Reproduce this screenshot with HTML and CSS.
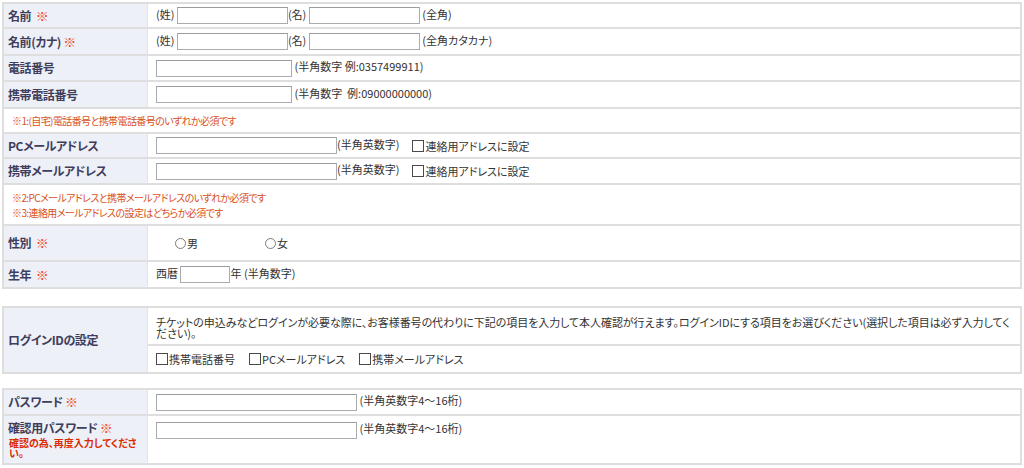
FILE: index.html
```html
<!DOCTYPE html>
<html lang="ja">
<head>
<meta charset="utf-8">
<title>会員情報入力</title>
<link rel="stylesheet" href="styles.css">
</head>
<body>
<div class="page">
  <table class="form">
    <tr class="r25"><th>名前&nbsp;&nbsp;<span class="req">※</span></th><td>(姓)&nbsp;<input class="txt w110" type="text">(名)&nbsp;<input class="txt w110" type="text"> (全角)</td></tr>
    <tr class="r27"><th>名前(カナ)&nbsp;<span class="req">※</span></th><td>(姓)&nbsp;<input class="txt w110" type="text">(名)&nbsp;<input class="txt w110" type="text"> (全角カタカナ)</td></tr>
    <tr class="r26"><th>電話番号</th><td><input class="txt w136" type="text"> (半角数字 例:0357499911)</td></tr>
    <tr class="r27"><th>携帯電話番号</th><td><input class="txt w136" type="text"> (半角数字&nbsp; 例:09000000000)</td></tr>
    <tr class="r25"><td class="note" colspan="2">※1:(自宅)電話番号と携帯電話番号のいずれか必須です</td></tr>
    <tr class="r25"><th>PCメールアドレス</th><td><input class="txt w181" type="text">(半角英数字)<span class="chk-gap"></span><label class="chk"><input class="box" type="checkbox">連絡用アドレスに設定</label></td></tr>
    <tr class="r26"><th>携帯メールアドレス</th><td><input class="txt w181" type="text">(半角英数字)<span class="chk-gap"></span><label class="chk"><input class="box" type="checkbox">連絡用アドレスに設定</label></td></tr>
    <tr class="r41"><td class="note" colspan="2">※2:PCメールアドレスと携帯メールアドレスのいずれか必須です<br>※3:連絡用メールアドレスの設定はどちらか必須です</td></tr>
    <tr class="r36"><th>性別&nbsp;&nbsp;<span class="req">※</span></th><td><div class="gender"><label class="opt"><input class="radio" type="radio" name="sex">男</label><label class="opt"><input class="radio" type="radio" name="sex">女</label></div></td></tr>
    <tr class="r27"><th>生年&nbsp;&nbsp;<span class="req">※</span></th><td>西暦 <input class="txt w50" type="text">年 (半角数字)</td></tr>
  </table>

  <table class="form login">
    <tr class="r38"><th rowspan="2">ログインIDの設定</th><td><div class="desc">チケットの申込みなどログインが必要な際に、お客様番号の代わりに下記の項目を入力して本人確認が行えます。ログインIDにする項目をお選びください(選択した項目は必ず入力してください)。</div></td></tr>
    <tr class="r28"><td><div class="choices"><label class="chk"><input class="box" type="checkbox">携帯電話番号</label><label class="chk"><input class="box" type="checkbox">PCメールアドレス</label><label class="chk"><input class="box" type="checkbox">携帯メールアドレス</label></div></td></tr>
  </table>

  <table class="form pass">
    <tr class="r26"><th>パスワード <span class="req">※</span></th><td><input class="txt w200" type="password"> (半角英数字4〜16桁)</td></tr>
    <tr class="r49"><th class="top">確認用パスワード <span class="req">※</span><div class="warn">確認の為、再度入力してください。</div></th><td class="top"><input class="txt w200" type="password"> (半角英数字4〜16桁)</td></tr>
  </table>
</div>
</body>
</html>
```

FILE: styles.css
```css
* {
  box-sizing: border-box;
}

body {
  margin: 0;
  background: #ffffff;
  font-family: "Noto Sans CJK JP", "Noto Sans", sans-serif;
  font-size: 11px;
  color: #333333;
  font-feature-settings: "palt";
}

.page {
  width: 1024px;
  padding: 2px 2px 0 2px;
}

.form {
  width: 1020px;
  border-collapse: separate;
  border-spacing: 0;
  border-top: 2px solid #dedede;
  border-left: 2px solid #dedede;
  border-right: 2px solid #dedede;
}

.form th,
.form td {
  border-bottom: 2px solid #dedede;
  padding: 0 7px 0 8px;
  vertical-align: middle;
  line-height: 14px;
}

.form th {
  width: 144px;
  padding: 0 4px 0 4px;
  background: #eef0f8;
  border-right: 1px solid #e2e4ec;
  text-align: left;
  font-size: 12px;
  font-weight: bold;
  letter-spacing: -0.4px;
  color: #3e3e5c;
}

.req {
  color: #f24c16;
  font-weight: bold;
  font-size: 13px;
}

.r25 > th, .r25 > td { height: 25px; }
.r26 > th, .r26 > td { height: 26px; }
.r27 > th, .r27 > td { height: 27px; }
.r28 > td { height: 28px; }
.r36 > th, .r36 > td { height: 36px; }
.r38 > td { height: 38px; }
.r41 > td { height: 41px; }
.r49 > th, .r49 > td { height: 49px; }

.txt {
  height: 17px;
  margin: 0;
  padding: 0 2px;
  border: 1px solid #a9abb0;
  border-top-color: #9a9ca2;
  background: #ffffff;
  vertical-align: middle;
  font-size: 12px;
}

.w50 { width: 50px; }
.w110 { width: 111px; }
.w136 { width: 136px; }
.w181 { width: 181px; }
.w200 { width: 201px; }

.form .note {
  padding-left: 8px;
  font-size: 10px;
  line-height: 15px;
  letter-spacing: -0.6px;
  color: #d9501a;
  font-weight: normal;
}

.chk-gap {
  display: inline-block;
  width: 13px;
}

.chk {
  display: inline-flex;
  align-items: center;
  vertical-align: middle;
}

.box {
  appearance: none;
  -webkit-appearance: none;
  width: 12px;
  height: 12px;
  margin: 0 1px 0 0;
  border: 1px solid #4a4a4a;
  background: #ffffff;
}

.gender {
  display: flex;
  padding-left: 19px;
}

.opt {
  display: inline-flex;
  align-items: center;
  width: 90px;
}

.radio {
  appearance: none;
  -webkit-appearance: none;
  width: 11px;
  height: 11px;
  margin: 0 1px 0 0;
  border: 1px solid #7d7d7d;
  border-radius: 50%;
  background: #ffffff;
}

.login {
  margin-top: 17px;
}

.desc {
  line-height: 11px;
  letter-spacing: -0.05px;
  padding-top: 4px;
}

.choices {
  display: flex;
  gap: 14px;
}

.pass {
  margin-top: 14px;
}

.form .top {
  vertical-align: top;
  padding-top: 5px;
}

.warn {
  margin-top: 3px;
  padding-left: 1px;
  font-size: 10px;
  line-height: 10px;
  letter-spacing: 0;
  color: #dd2a00;
  font-weight: bold;
}
```
